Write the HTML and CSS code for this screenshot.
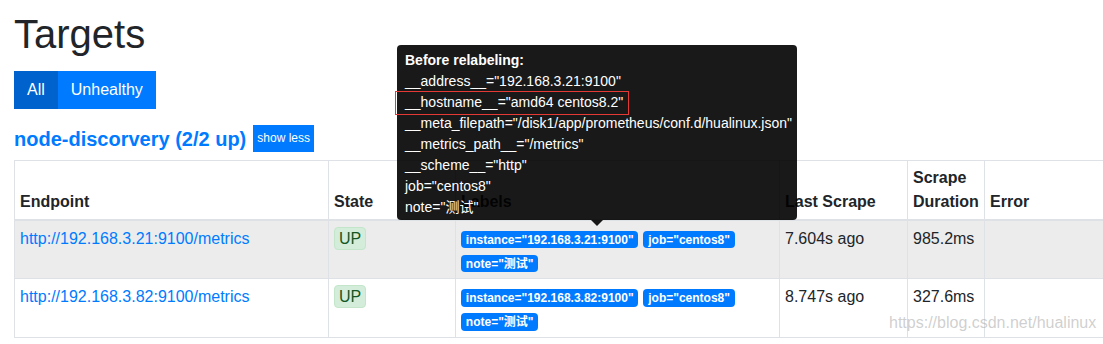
FILE: index.html
```html
<!DOCTYPE html>
<html lang="en">
<head>
<meta charset="utf-8">
<title>Targets</title>
<link rel="stylesheet" href="styles.css">
</head>
<body>
<div class="page">
  <h1 class="title">Targets</h1>
  <div class="btn-group">
    <button class="btn btn-active">All</button><button class="btn">Unhealthy</button>
  </div>
  <div class="pool-head">
    <a class="pool-name" href="#">node-discorvery (2/2 up)</a>
    <button class="btn-sm">show less</button>
  </div>
  <div class="table-wrap">
    <table class="targets">
      <colgroup>
        <col class="c-endpoint"><col class="c-state"><col class="c-labels"><col class="c-last"><col class="c-dur"><col class="c-error">
      </colgroup>
      <thead>
        <tr>
          <th>Endpoint</th>
          <th>State</th>
          <th>Labels</th>
          <th>Last Scrape</th>
          <th>Scrape Duration</th>
          <th>Error</th>
        </tr>
      </thead>
      <tbody>
        <tr class="hover">
          <td><a class="link" href="#">http://192.168.3.21:9100/metrics</a></td>
          <td><span class="state-up">UP</span></td>
          <td><span class="badge">instance="192.168.3.21:9100"</span><span class="badge">job="centos8"</span><span class="badge">note="测试"</span></td>
          <td>7.604s ago</td>
          <td>985.2ms</td>
          <td></td>
        </tr>
        <tr>
          <td><a class="link" href="#">http://192.168.3.82:9100/metrics</a></td>
          <td><span class="state-up">UP</span></td>
          <td><span class="badge">instance="192.168.3.82:9100"</span><span class="badge">job="centos8"</span><span class="badge">note="测试"</span></td>
          <td>8.747s ago</td>
          <td>327.6ms</td>
          <td></td>
        </tr>
      </tbody>
    </table>
  </div>

  <div class="tooltip">
    <div class="tip-head">Before relabeling:</div>
    <div>__address__="192.168.3.21:9100"</div>
    <div><span class="marked">__hostname__="amd64 centos8.2"</span></div>
    <div>__meta_filepath="/disk1/app/prometheus/conf.d/hualinux.json"</div>
    <div>__metrics_path__="/metrics"</div>
    <div>__scheme__="http"</div>
    <div>job="centos8"</div>
    <div>note="测试"</div>
  </div>

  <div class="watermark">https://blog.csdn.net/hualinux</div>
</div>
</body>
</html>
```

FILE: styles.css
```css
html, body {
  margin: 0;
  padding: 0;
  overflow: hidden;
  background: #fff;
}

body {
  font-family: "Liberation Sans", Arial, "Noto Sans CJK SC", sans-serif;
  font-size: 16px;
  line-height: 1.5;
  color: #212529;
}

.page {
  position: relative;
  padding: 10px 0 0 14px;
}

.title {
  margin: 0 0 13px 0;
  font-size: 40px;
  font-weight: 400;
  line-height: 48px;
  color: #212529;
}

.btn-group {
  display: flex;
  margin-bottom: 16px;
}

.btn {
  border: 0;
  margin: 0;
  background: #007bff;
  color: #fff;
  font-family: inherit;
  font-size: 16px;
  line-height: 24px;
  padding: 7px 13px;
  border-radius: 0;
}

.btn-active {
  background: #0062cc;
}

.pool-head {
  display: flex;
  align-items: center;
  gap: 7px;
  height: 27px;
  margin-bottom: 8px;
}

.pool-name {
  font-size: 20px;
  font-weight: 700;
  color: #007bff;
  text-decoration: none;
  line-height: 24px;
}

.btn-sm {
  border: 0;
  background: #007bff;
  color: #fff;
  font-family: inherit;
  font-size: 12px;
  line-height: 17px;
  padding: 5px 4px;
  border-radius: 0;
}

.table-wrap {
  width: 1110px;
}

.targets {
  border-collapse: collapse;
  table-layout: fixed;
  width: 1110px;
}

.c-endpoint { width: 314px; }
.c-state { width: 127px; }
.c-labels { width: 324px; }
.c-last { width: 128px; }
.c-dur { width: 77px; }
.c-error { width: 140px; }

.targets th,
.targets td {
  border: 1px solid #dee2e6;
  padding: 6px 5px 3.5px 5px;
  text-align: left;
  vertical-align: top;
}

.targets th {
  vertical-align: bottom;
  font-weight: 700;
  padding: 4.5px 5px 5px 5px;
  border-bottom: 2px solid #dee2e6;
}

.targets tr.hover td {
  background: #ececec;
}

.link {
  color: #007bff;
  text-decoration: none;
}

.state-up {
  display: inline-block;
  background: #d4edda;
  border: 1px solid #c3e6cb;
  color: #155724;
  border-radius: 4px;
  padding: 0 4px;
  line-height: 21px;
  font-size: 16px;
}

.badge {
  display: inline-block;
  background: #007bff;
  color: #fff;
  font-size: 12px;
  font-weight: 700;
  line-height: 1;
  padding: 3px 4.8px 2.5px;
  border-radius: 4px;
  margin-right: 5px;
  font-family: "Liberation Sans", Arial, "Noto Sans CJK SC", sans-serif;
}

.tooltip {
  position: absolute;
  left: 397px;
  top: 45px;
  width: 400px;
  box-sizing: border-box;
  padding: 5px 8px 2px 8px;
  background: rgba(0, 0, 0, 0.9);
  color: #fff;
  font-size: 14px;
  line-height: 21px;
  border-radius: 4px;
}

.tooltip::after {
  content: "";
  position: absolute;
  left: 194px;
  bottom: -6px;
  border-left: 6px solid transparent;
  border-right: 6px solid transparent;
  border-top: 6px solid rgba(0, 0, 0, 0.9);
}

.tip-head {
  font-weight: 700;
}

.marked {
  position: relative;
  display: inline-block;
}

.marked::after {
  content: "";
  position: absolute;
  left: -10px;
  right: -6px;
  top: -1px;
  bottom: -2px;
  border: 1px solid #e53935;
}

.watermark {
  position: absolute;
  left: 889px;
  top: 314px;
  font-size: 16px;
  line-height: 18px;
  color: rgba(160, 160, 160, 0.5);
}
```
